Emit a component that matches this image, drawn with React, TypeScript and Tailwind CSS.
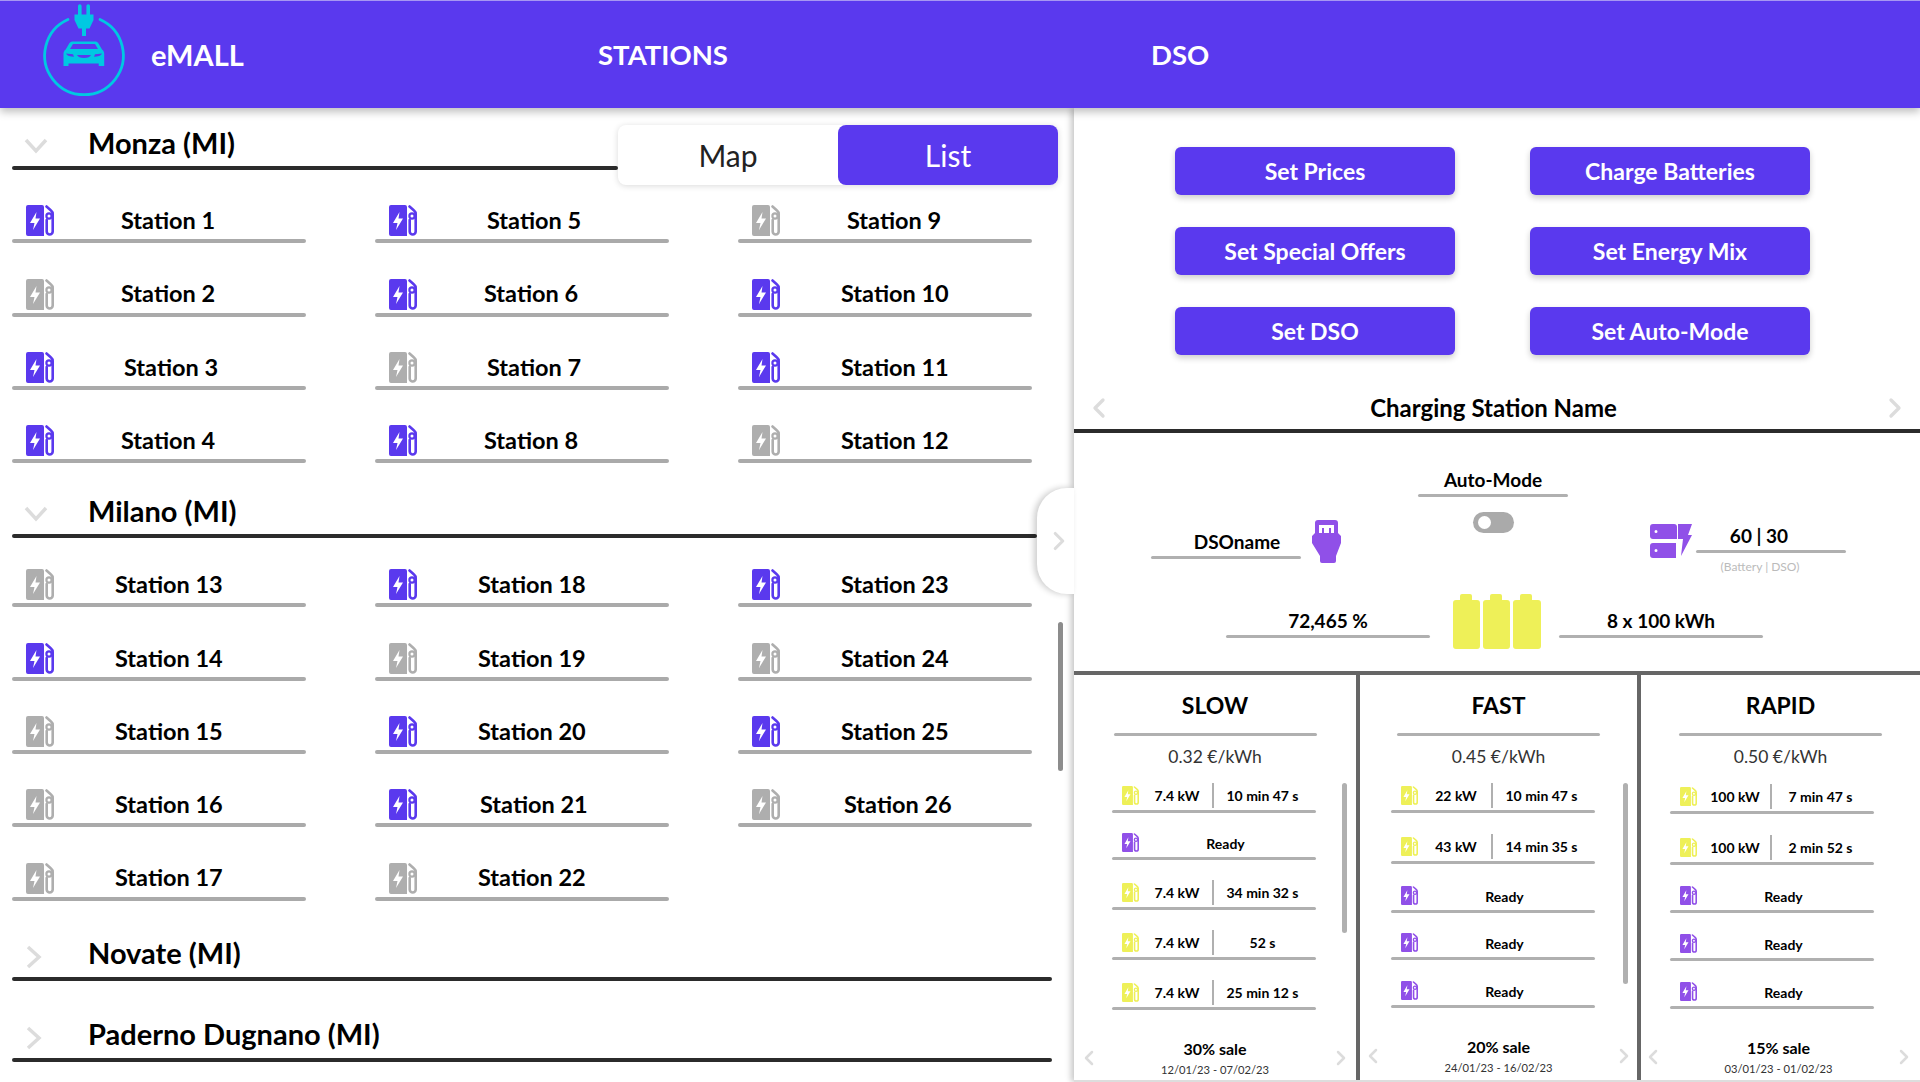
import { ChevronLeft, ChevronRight } from "lucide-react";

const stationsMonza = [
  { name: "Station 1", on: true, gap: "ml-[67px]" },
  { name: "Station 5", on: true, gap: "ml-[70px]" },
  { name: "Station 9", on: false, gap: "ml-[67px]" },
  { name: "Station 2", on: false, gap: "ml-[67px]" },
  { name: "Station 6", on: true, gap: "ml-[67px]" },
  { name: "Station 10", on: true, gap: "ml-[61px]" },
  { name: "Station 3", on: true, gap: "ml-[70px]" },
  { name: "Station 7", on: false, gap: "ml-[70px]" },
  { name: "Station 11", on: true, gap: "ml-[61px]" },
  { name: "Station 4", on: true, gap: "ml-[67px]" },
  { name: "Station 8", on: true, gap: "ml-[67px]" },
  { name: "Station 12", on: false, gap: "ml-[61px]" },
];

const stationsMilano = [
  { name: "Station 13", on: false, gap: "ml-[61px]" },
  { name: "Station 18", on: true, gap: "ml-[61px]" },
  { name: "Station 23", on: true, gap: "ml-[61px]" },
  { name: "Station 14", on: true, gap: "ml-[61px]" },
  { name: "Station 19", on: false, gap: "ml-[61px]" },
  { name: "Station 24", on: false, gap: "ml-[61px]" },
  { name: "Station 15", on: false, gap: "ml-[61px]" },
  { name: "Station 20", on: true, gap: "ml-[61px]" },
  { name: "Station 25", on: true, gap: "ml-[61px]" },
  { name: "Station 16", on: false, gap: "ml-[61px]" },
  { name: "Station 21", on: true, gap: "ml-[63px]" },
  { name: "Station 26", on: false, gap: "ml-[64px]" },
  { name: "Station 17", on: false, gap: "ml-[61px]" },
  { name: "Station 22", on: false, gap: "ml-[61px]" },
];

const sockets = [
  {
    title: "SLOW",
    price: "0.32 €/kWh",
    sale: "30% sale",
    dates: "12/01/23 - 07/02/23",
    colClass: "w-[286px] border-r-4 border-[#666]",
    rowsClass: "ml-[38px]",
    footClass: "pl-[3px] pr-[3px]",
    bar: "left-[268px] h-[150px]",
    rows: [
      { h: "h-[41px]", kw: "7.4 kW", time: "10 min 47 s" },
      { h: "h-[47px]" },
      { h: "h-[50px]", kw: "7.4 kW", time: "34 min 32 s" },
      { h: "h-[50px]", kw: "7.4 kW", time: "52 s" },
      { h: "h-[50px]", kw: "7.4 kW", time: "25 min 12 s" },
    ],
  },
  {
    title: "FAST",
    price: "0.45 €/kWh",
    sale: "20% sale",
    dates: "24/01/23 - 16/02/23",
    colClass: "w-[281px] border-r-4 border-[#666]",
    rowsClass: "ml-[31px]",
    footClass: "pl-[1px] pr-[1px]",
    bar: "left-[263px] h-[201px]",
    rows: [
      { h: "h-[41px]", kw: "22 kW", time: "10 min 47 s" },
      { h: "h-[51px]", kw: "43 kW", time: "14 min 35 s" },
      { h: "h-[49px]" },
      { h: "h-[47px]" },
      { h: "h-[48px]" },
    ],
  },
  {
    title: "RAPID",
    price: "0.50 €/kWh",
    sale: "15% sale",
    dates: "03/01/23 - 01/02/23",
    colClass: "flex-1",
    rowsClass: "ml-[29px]",
    footClass: "pl-[0px] pr-[4px]",
    bar: "",
    rows: [
      { h: "h-[42px]", kw: "100 kW", time: "7 min 47 s" },
      { h: "h-[51px]", kw: "100 kW", time: "2 min 52 s" },
      { h: "h-[48px]" },
      { h: "h-[48px]" },
      { h: "h-[48px]" },
    ],
  },
];

function PumpIcon({ className }: { className: string }) {
  return (
    <svg viewBox="0 0 28 31" className={className} fill="none">
      <path
        fill="currentColor"
        fillRule="evenodd"
        d="M2 0h14a2 2 0 0 1 2 2v29H2a2 2 0 0 1-2-2V2a2 2 0 0 1 2-2zM10.500 7 4 18h4.500l-1.500 7 7-11.500H9.500z"
      />
      <path
        stroke="currentColor"
        strokeWidth="2.600"
        strokeLinecap="round"
        strokeLinejoin="round"
        d="M20.500 1.500l4.500 4c1.200 1 1.700 2 1.700 3.500V26.500a3 3 0 0 1-6 0V15"
      />
      <circle cx="23" cy="11" r="2.600" stroke="currentColor" strokeWidth="2.200" />
    </svg>
  );
}

function Logo() {
  return (
    <svg viewBox="0 0 120 110" className="w-[120px] h-[110px] text-[#00c8e2]" fill="none">
      <path
        d="M48 19.500A39.300 39.300 0 1 0 80 19.500"
        stroke="currentColor"
        strokeWidth="2.800"
        strokeLinecap="round"
      />
      <path
        fill="currentColor"
        d="M58 6a1.800 1.800 0 0 1 3.600 0V14.500h4.800V6a1.800 1.800 0 0 1 3.600 0V14.500h3.500V20L69.500 28.500H66V36H62V28.500H58.500L54.500 20V14.500H58z"
      />
      <path
        fill="currentColor"
        fillRule="evenodd"
        d="M53 41.500h22c1.500 0 2.500.5 3.500 2l3.500 6c1.500 1 2.200 2.500 2.200 4.500V66h-5.500v-2.500H48.500V66H43.500V54c0-2 .7-3.500 2.200-4.500l3.500-6c1-1.500 2.300-2 3.800-2zM53 44l-3 5h28l-3-5zM46 53.500c1 2.200 4 3.200 8 3.200l-1-2.500zM82 53.500c-1 2.200-4 3.200-8 3.200l1-2.500zM57 55c1 2 3 3 7 3s6-1 7-3z"
      />
    </svg>
  );
}

function Chevron({ open }: { open: boolean }) {
  return (
    <div className="w-[76px] flex items-center justify-start pl-[12px]">
      {open ? (
        <svg viewBox="0 0 24 16" className="w-[24px] h-[16px] mt-[8px]" fill="none">
          <path d="M2 2l10 11L22 2" stroke="#dcdcdc" strokeWidth="3.500" />
        </svg>
      ) : (
        <svg viewBox="0 0 16 24" className="w-[16px] h-[24px] mt-[8px] ml-[2px]" fill="none">
          <path d="M2 2l11 10L2 22" stroke="#dcdcdc" strokeWidth="3.500" />
        </svg>
      )}
    </div>
  );
}

function CityHeading({
  name,
  open,
  className,
}: {
  name: string;
  open: boolean;
  className: string;
}) {
  return (
    <div className={`flex flex-col justify-end ${className}`}>
      <div className="flex items-center h-[36px] mb-[6px]">
        <Chevron open={open} />
        <span className="text-[29px] leading-none font-bold text-black">{name}</span>
      </div>
      <div className="h-[4px] rounded-full bg-[#2b2b2b]" />
    </div>
  );
}

function StationGrid({ stations }: { stations: { name: string; on: boolean; gap: string }[] }) {
  return (
    <div className="grid grid-cols-[294px_294px_294px] auto-rows-[73.3px] gap-x-[69px] pl-[12px]">
      {stations.map((s) => (
        <div key={s.name} className="flex flex-col justify-end">
          <div className="flex items-center h-[34px] pl-[14px] pb-[3px]">
            <PumpIcon
              className={s.on ? "w-[28px] h-[31px] text-[#5a39ee]" : "w-[28px] h-[31px] text-[#aeaeae]"}
            />
            <span className={`${s.gap} text-[23.500px] leading-none font-bold text-black`}>{s.name}</span>
          </div>
          <div className="h-[4px] rounded-full bg-[#aaaaaa]" />
        </div>
      ))}
    </div>
  );
}

function UnderlinedValue({
  children,
  className,
  textClass,
}: {
  children: React.ReactNode;
  className: string;
  textClass?: string;
}) {
  return (
    <div className={className}>
      <div className={`text-[19px] leading-[28px] font-bold text-center text-black ${textClass ?? ""}`}>{children}</div>
      <div className="h-[3px] rounded-full bg-[#b0b0b0]" />
    </div>
  );
}

function SocketColumn({ s }: { s: (typeof sockets)[number] }) {
  return (
    <div className={`relative flex flex-col ${s.colClass}`}>
      <div className="mx-auto w-[203px] h-[61px] flex flex-col justify-end">
        <div className="text-[23px] leading-[34px] font-bold text-center text-black mb-[11px]">{s.title}</div>
        <div className="h-[3px] rounded-full bg-[#b0b0b0]" />
      </div>
      <div className="text-[17.500px] leading-[24px] text-center text-[#333] mt-[9px] mb-[3px]">{s.price}</div>
      <div className={`w-[204px] ${s.rowsClass}`}>
        {s.rows.map((r, i) => (
          <div key={i} className={`${r.h} flex flex-col justify-end`}>
            <div className="flex items-center h-[29px]">
              {r.kw ? (
                <>
                  <div className="w-[100px] flex items-center pl-[10px]">
                    <PumpIcon className="w-[17px] h-[19px] text-[#eef058]" />
                    <span className="flex-1 text-center text-[14px] font-bold text-black pl-[3px]">{r.kw}</span>
                  </div>
                  <div className="w-[2px] h-[25px] bg-[#b0b0b0]" />
                  <span className="flex-1 text-center text-[14px] font-bold text-black pr-[5px]">{r.time}</span>
                </>
              ) : (
                <>
                  <div className="pl-[10px]">
                    <PumpIcon className="w-[17px] h-[19px] text-[#9050e8]" />
                  </div>
                  <span className="flex-1 text-center text-[14px] font-bold text-black mt-[2px] pr-[4px]">Ready</span>
                </>
              )}
            </div>
            <div className="h-[3px] rounded-full bg-[#b0b0b0]" />
          </div>
        ))}
      </div>
      {s.bar && <div className={`absolute top-[108px] w-[5px] rounded-full bg-[#b0b0b0] ${s.bar}`} />}
      <div className={`flex items-center justify-between mt-[27px] ${s.footClass}`}>
        <ChevronLeft className="w-[24px] h-[24px] text-[#dcdcdc]" strokeWidth={2.500} />
        <div className="text-center">
          <div className="text-[16px] leading-[24px] font-bold text-black">{s.sale}</div>
          <div className="text-[11.200px] leading-[18px] text-[#333]">{s.dates}</div>
        </div>
        <ChevronRight className="w-[24px] h-[24px] text-[#dcdcdc]" strokeWidth={2.500} />
      </div>
    </div>
  );
}

export default function App() {
  return (
    <div className="w-screen h-screen overflow-hidden flex flex-col bg-white font-['Lato',sans-serif]">
      <header className="relative z-20 h-[108px] shrink-0 flex items-center bg-[#5a39ee] border-t border-[#a797f2] shadow-[0_4px_8px_rgba(0,0,0,0.25)] text-white">
        <div className="ml-[20px] w-[131px]">
          <Logo />
        </div>
        <span className="w-[447px] text-[29px] font-bold">eMALL</span>
        <span className="w-[553px] text-[27.500px] font-bold">STATIONS</span>
        <span className="text-[27.500px] font-bold">DSO</span>
      </header>

      <main className="relative flex-1 flex min-h-0">
        <section className="w-[1074px] shrink-0">
          <div className="flex items-start h-[62px] pl-[12px]">
            <CityHeading name="Monza (MI)" open className="w-[606px] h-[62px]" />
            <div className="mt-[17px] w-[440px] h-[60px] flex rounded-lg bg-white shadow-[0_1px_6px_rgba(0,0,0,0.15)]">
              <div className="flex-1 flex items-center justify-center text-[30px] text-[#222]">Map</div>
              <div className="flex-1 flex items-center justify-center text-[30px] text-white bg-[#5a39ee] rounded-lg">
                List
              </div>
            </div>
          </div>
          <StationGrid stations={stationsMonza} />
          <div className="pl-[12px] w-[1037px] mt-[10px] mb-[-4px]">
            <CityHeading name="Milano (MI)" open className="h-[65px]" />
          </div>
          <StationGrid stations={stationsMilano} />
          <div className="pl-[12px]">
            <CityHeading name="Novate (MI)" open={false} className="w-[1040px] h-[80px]" />
            <CityHeading name="Paderno Dugnano (MI)" open={false} className="w-[1040px] h-[81px]" />
          </div>
        </section>

        <section className="relative z-10 flex-1 flex flex-col bg-white shadow-[-3px_0_6px_rgba(0,0,0,0.22)]">
          <div className="grid grid-cols-[280px_280px] gap-x-[75px] gap-y-[32px] pl-[101px] pt-[39px]">
            {["Set Prices", "Charge Batteries", "Set Special Offers", "Set Energy Mix", "Set DSO", "Set Auto-Mode"].map(
              (label) => (
                <div
                  key={label}
                  className="h-[48px] pt-[1px] flex items-center justify-center rounded-md bg-[#5a39ee] text-white text-[23px] font-bold shadow-[0_3px_6px_rgba(0,0,0,0.2)]"
                >
                  {label}
                </div>
              )
            )}
          </div>

          <div className="mt-[32px] h-[46px] flex items-center justify-between px-[9px] border-b-4 border-[#2b2b2b]">
            <ChevronLeft className="w-[32px] h-[32px] text-[#dcdcdc]" strokeWidth={2.500} />
            <span className="text-[24px] font-bold text-black mr-[7px]">Charging Station Name</span>
            <ChevronRight className="w-[32px] h-[32px] text-[#dcdcdc]" strokeWidth={2.500} />
          </div>

          <div className="h-[161px] flex items-start">
            <UnderlinedValue className="ml-[77px] mt-[95px] w-[150px]" textClass="pl-[22px]">
              DSOname
            </UnderlinedValue>
            <svg viewBox="0 0 29 43" className="ml-[11px] mt-[87px] w-[29px] h-[43px] text-[#9050e8]">
              <path
                fill="currentColor"
                fillRule="evenodd"
                d="M6 0h17a3 3 0 0 1 3 3v10l3 3v7l-5 13v5a2 2 0 0 1-2 2H10a2 2 0 0 1-2-2v-5L0 23v-7l3-3V3a3 3 0 0 1 3-3zM7 5v8h3V8h2v5h5V8h2v5h3V5z"
              />
            </svg>
            <div className="ml-[77px] mt-[33px] w-[150px] flex flex-col items-center">
              <div className="w-full text-[19px] leading-[28px] font-bold text-center text-black">Auto-Mode</div>
              <div className="w-full h-[3px] rounded-full bg-[#b0b0b0]" />
              <div className="mt-[15px] w-[41px] h-[21px] rounded-full bg-[#aaaaaa] flex items-center pl-[5px]">
                <div className="w-[13px] h-[13px] rounded-full bg-white" />
              </div>
            </div>
            <svg viewBox="0 0 42 34" className="ml-[82px] mt-[91px] w-[42px] h-[34px] text-[#9050e8]">
              <path
                fill="currentColor"
                fillRule="evenodd"
                d="M3 0h21a3 3 0 0 1 3 3v12H3a3 3 0 0 1-3-3V3a3 3 0 0 1 3-3zM6 6a1.500 1.500 0 1 0 0 3a1.500 1.500 0 1 0 0-3zM3 19h23v15H3a3 3 0 0 1-3-3V22a3 3 0 0 1 3-3zM6 25a1.500 1.500 0 1 0 0 3a1.500 1.500 0 1 0 0-3z"
              />
              <path fill="currentColor" d="M28 0h14l-4 11h4L31 32l2-17h-5z" />
            </svg>
            <div className="ml-[4px] mt-[89px] w-[150px]">
              <UnderlinedValue className="w-full" textClass="pr-[24px]">
                60 | 30
              </UnderlinedValue>
              <div className="mt-[6px] pr-[22px] text-[12px] leading-[16px] text-center text-[#bbbbbb]">(Battery | DSO)</div>
            </div>
          </div>

          <div className="h-[77px] flex items-start pl-[152px]">
            <UnderlinedValue className="mt-[13px] w-[204px]">72,465 %</UnderlinedValue>
            <svg viewBox="0 0 88 55" className="ml-[23px] w-[88px] h-[55px] text-[#eef058]">
              <path
                fill="currentColor"
                d="M9 0h8a2 2 0 0 1 2 2v4h5a3 3 0 0 1 3 3v43a3 3 0 0 1-3 3H3a3 3 0 0 1-3-3V9a3 3 0 0 1 3-3h4V2a2 2 0 0 1 2-2zM39 0h8a2 2 0 0 1 2 2v4h5a3 3 0 0 1 3 3v43a3 3 0 0 1-3 3H33a3 3 0 0 1-3-3V9a3 3 0 0 1 3-3h4V2a2 2 0 0 1 2-2zM69 0h8a2 2 0 0 1 2 2v4h6a3 3 0 0 1 3 3v43a3 3 0 0 1-3 3H63a3 3 0 0 1-3-3V9a3 3 0 0 1 3-3h4V2a2 2 0 0 1 2-2z"
              />
            </svg>
            <UnderlinedValue className="ml-[18px] mt-[13px] w-[204px]">8 x 100 kWh</UnderlinedValue>
          </div>

          <div className="flex-1 flex min-h-0 border-t-4 border-b-2 border-t-[#666] border-b-[#dddddd]">
            {sockets.map((s) => (
              <SocketColumn key={s.title} s={s} />
            ))}
          </div>
        </section>

        <div className="absolute left-[1058px] top-[514px] w-[5px] h-[149px] rounded-full bg-[#8c8c8c]" />
        <div className="absolute z-20 left-[1037px] top-[380px] w-[37px] h-[106px] rounded-l-[30px] bg-white shadow-[-3px_0_6px_rgba(0,0,0,0.2)] flex items-center justify-center pl-[7px]">
          <ChevronRight className="w-[30px] h-[30px] text-[#dcdcdc]" strokeWidth={2.500} />
        </div>
      </main>
    </div>
  );
}
